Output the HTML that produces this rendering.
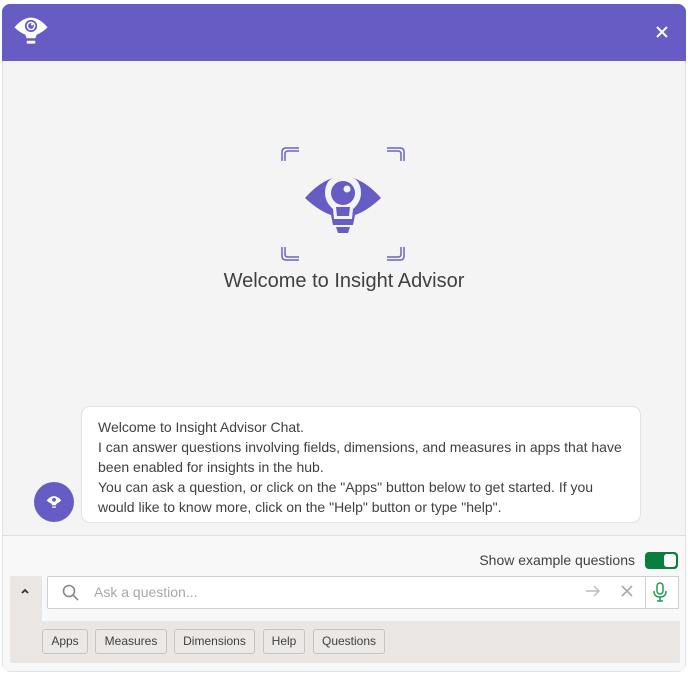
<!DOCTYPE html>
<html><head><style>
*{box-sizing:border-box;margin:0;padding:0}
body{width:688px;height:674px;background:#fff;font-family:"Liberation Sans",sans-serif;position:relative;overflow:hidden}
.wrap{position:absolute;left:2px;top:4px;width:684px;height:668px;border-radius:8px;background:#f4f4f4;overflow:hidden;box-shadow:inset 0 0 0 1px #e0e0e0}
.hdr{position:absolute;left:0;top:0;width:100%;height:57px;background:#665cc4}
.abs{position:absolute}
.bubble{position:absolute;left:79px;top:402px;width:560px;height:117px;background:#fff;border:1px solid #e2e2e2;border-radius:9px;padding:10px 16px;font-size:14px;line-height:20px;color:#404040}
.bot{position:absolute;left:1px;top:531px;width:682px;height:136px;background:#f8f8f8;border-top:1px solid #ddd}
.btn{position:absolute;top:625px;height:25px;border:1px solid #c4c4c4;border-radius:3px;background:#ebe8e6;font-size:12px;color:#404040;line-height:23px;text-align:center}
</style></head><body>
<div class="wrap">
<div class="hdr">
<svg class="abs" style="left:11px;top:9px" width="36" height="36" viewBox="0 0 100 100">
<path d="M4 40 Q50 -14 96 40 Q82 54 66 60 L62 70 L38 70 L34 60 Q18 54 4 40Z" fill="#fff"/>
<circle cx="50" cy="36" r="17" fill="#665cc4"/><circle cx="50" cy="36" r="12" fill="#fff"/><circle cx="50" cy="36" r="8" fill="#665cc4"/><circle cx="53" cy="32" r="3" fill="#fff"/>
<rect x="38" y="77" width="24" height="8" rx="2" fill="#fff"/>
</svg>
<svg class="abs" style="left:653px;top:21px" width="14" height="14" viewBox="0 0 14 14"><path d="M2 2L12 12M12 2L2 12" stroke="#fff" stroke-width="2"/></svg>
</div>
<svg class="abs" style="left:279px;top:143px" width="124" height="114" viewBox="0 0 124 114" fill="none" stroke="#6b63c6" stroke-width="1.5">
<path d="M1 14V5Q1 1 5 1H18"/><path d="M4 14V7Q4 4 7 4H18"/>
<path d="M123 14V5Q123 1 119 1H106"/><path d="M120 14V7Q120 4 117 4H106"/>
<path d="M1 100V109Q1 113 5 113H18"/><path d="M4 100V107Q4 110 7 110H18"/>
<path d="M123 100V109Q123 113 119 113H106"/><path d="M120 100V107Q120 110 117 110H106"/>
<g transform="translate(24,24)" stroke="none">
<path d="M0 27 Q38 -16 76 27 Q62 40 50 44 L48 54 L28 54 L26 44 Q14 40 0 27Z" fill="#665cc4"/>
<path d="M38 5 Q56 5 56 22 Q56 31 48 38 L47 48 L29 48 L28 38 Q20 31 20 22 Q20 5 38 5Z" fill="#f4f4f4"/>
<circle cx="38" cy="22" r="12" fill="#665cc4"/><circle cx="42" cy="18" r="3.5" fill="#f4f4f4"/>
<path d="M31 36H45L44 45H32Z" fill="#665cc4"/>
<rect x="29" y="50" width="18" height="3" fill="#665cc4"/>
<path d="M31 56H45L43 62H33Z" fill="#665cc4"/>
</g>
</svg>
<div class="abs" style="left:0;width:100%;top:266px;text-align:center;font-size:20px;color:#404040">Welcome to Insight Advisor</div>
<div class="bubble">Welcome to Insight Advisor Chat.<br>I can answer questions involving fields, dimensions, and measures in apps that have been enabled for insights in the hub.<br>You can ask a question, or click on the "Apps" button below to get started. If you would like to know more, click on the "Help" button or type "help".</div>
<div class="abs" style="left:32px;top:478px;width:40px;height:40px;border-radius:50%;background:#665cc4">
<svg class="abs" style="left:12px;top:12px" width="16" height="16" viewBox="0 0 100 100"><path d="M4 40 Q50 -14 96 40 Q82 54 66 60 L62 70 L38 70 L34 60 Q18 54 4 40Z" fill="#fff"/><circle cx="50" cy="36" r="12" fill="#665cc4"/><rect x="38" y="78" width="24" height="8" fill="#fff"/></svg></div>
<div class="bot"></div>
<div class="abs" style="left:420px;top:548px;width:213px;text-align:right;font-size:14px;color:#404040">Show example questions</div>
<div class="abs" style="left:643px;top:548px;width:33px;height:17px;border-radius:4px;background:#0a7e3e"><div class="abs" style="left:19px;top:2px;width:12px;height:13px;border-radius:3px;background:#fff"></div></div>
<div class="abs" style="left:8px;top:572px;width:670px;height:87px;background:#e9e6e4;border-radius:2px"></div>
<div class="abs" style="left:40px;top:572px;width:640px;height:45px;background:#f8f8f8"></div>
<svg class="abs" style="left:18px;top:583px" width="10" height="8" viewBox="0 0 10 8"><path d="M2 6L5 3L8 6" stroke="#333" stroke-width="1.8" fill="none"/></svg>
<div class="abs" style="left:45px;top:572px;width:632px;height:33px;background:#fff;border:1px solid #d0d0d0;border-radius:2px"></div>
<svg class="abs" style="left:59px;top:579px" width="20" height="20" viewBox="0 0 20 20" fill="none" stroke="#888" stroke-width="1.6"><circle cx="8" cy="8" r="5.5"/><path d="M12 12L17 17"/></svg>
<div class="abs" style="left:92px;top:580px;font-size:14px;color:#a8a8a8">Ask a question...</div>
<svg class="abs" style="left:583px;top:580px" width="16" height="14" viewBox="0 0 16 14" fill="none" stroke="#bbb" stroke-width="1.4"><path d="M1 7H14M9 2L14 7L9 12"/></svg>
<svg class="abs" style="left:618px;top:580px" width="14" height="14" viewBox="0 0 14 14" stroke="#aaa" stroke-width="1.6"><path d="M2 2L12 12M12 2L2 12"/></svg>
<div class="abs" style="left:643px;top:572px;width:34px;height:33px;border-left:1px solid #d0d0d0;border-right:1px solid #d0d0d0"></div>
<svg class="abs" style="left:650px;top:578px" width="16" height="20" viewBox="0 0 16 20" fill="none" stroke="#1e9e4a" stroke-width="1.5"><rect x="5" y="1" width="6" height="11" rx="3"/><path d="M2 9Q2 15 8 15Q14 15 14 9M8 15V19M5 19H11"/></svg>
<div class="btn" style="left:40px;width:46px">Apps</div>
<div class="btn" style="left:93px;width:72px">Measures</div>
<div class="btn" style="left:172px;width:81px">Dimensions</div>
<div class="btn" style="left:261px;width:42px">Help</div>
<div class="btn" style="left:311px;width:72px">Questions</div>
</div>
</body></html>
